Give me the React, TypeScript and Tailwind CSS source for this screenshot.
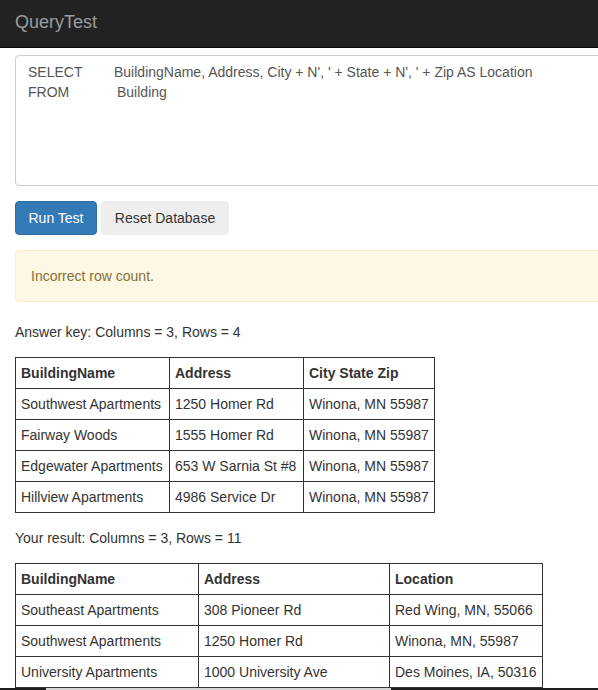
export default function App() {
  const answerRows = [
    ["Southwest Apartments", "1250 Homer Rd", "Winona, MN 55987"],
    ["Fairway Woods", "1555 Homer Rd", "Winona, MN 55987"],
    ["Edgewater Apartments", "653 W Sarnia St #8", "Winona, MN 55987"],
    ["Hillview Apartments", "4986 Service Dr", "Winona, MN 55987"],
  ];

  const resultRows = [
    ["Southeast Apartments", "308 Pioneer Rd", "Red Wing, MN, 55066"],
    ["Southwest Apartments", "1250 Homer Rd", "Winona, MN, 55987"],
    ["University Apartments", "1000 University Ave", "Des Moines, IA, 50316"],
  ];

  const cell = "border border-[#333] px-[5px] py-[5px] leading-5 whitespace-nowrap text-left align-top";

  return (
    <div className="min-h-screen w-full overflow-x-hidden bg-white text-[14px] text-[#333] font-['Liberation_Sans',Arial,sans-serif]">
      {/* Navbar */}
      <div className="h-[48px] bg-[#222] border-b border-[#080808]">
        <div className="px-[15px] pt-[12px] text-[18px] leading-5 text-[#9d9d9d]">QueryTest</div>
      </div>

      <div className="px-[15px] pt-[7px]">
        {/* Query box */}
        <div className="w-[800px] h-[131px] rounded border border-[#ccc] bg-white px-[12px] pt-[6px] text-[#555] leading-5">
          <div className="flex">
            <span className="w-[86px] shrink-0">SELECT</span>
            <span>BuildingName, Address, City + N', ' + State + N', ' + Zip AS Location</span>
          </div>
          <div className="flex">
            <span className="w-[89px] shrink-0">FROM</span>
            <span>Building</span>
          </div>
        </div>

        {/* Buttons */}
        <div className="mt-[15px] flex gap-1">
          <button className="h-[34px] w-[82px] rounded border border-[#2e6da4] bg-[#337ab7] text-white leading-5">
            Run Test
          </button>
          <button className="h-[34px] w-[128px] rounded border border-[#eee] bg-[#eee] text-[#333] leading-5">
            Reset Database
          </button>
        </div>

        {/* Alert */}
        <div className="mt-[15px] w-[800px] rounded border border-[#faebcc] bg-[#fcf8e3] p-[15px] leading-5 text-[#8a6d3b]">
          Incorrect row count.
        </div>

        <p className="mt-[20px] leading-5">Answer key: Columns = 3, Rows = 4</p>
        <table className="mt-[15px] border-collapse">
          <thead>
            <tr>
              <th className={cell + " w-[154px] font-bold"}>BuildingName</th>
              <th className={cell + " w-[134px] font-bold"}>Address</th>
              <th className={cell + " w-[131px] font-bold"}>City State Zip</th>
            </tr>
          </thead>
          <tbody>
            {answerRows.map((r) => (
              <tr key={r[0]}>
                {r.map((c, i) => (
                  <td key={i} className={cell}>
                    {c}
                  </td>
                ))}
              </tr>
            ))}
          </tbody>
        </table>

        <p className="mt-[15px] leading-5">Your result: Columns = 3, Rows = 11</p>
        <table className="mt-[15px] border-collapse">
          <thead>
            <tr>
              <th className={cell + " w-[183px] font-bold"}>BuildingName</th>
              <th className={cell + " w-[191px] font-bold"}>Address</th>
              <th className={cell + " w-[153px] font-bold"}>Location</th>
            </tr>
          </thead>
          <tbody>
            {resultRows.map((r) => (
              <tr key={r[0]}>
                {r.map((c, i) => (
                  <td key={i} className={cell}>
                    {c}
                  </td>
                ))}
              </tr>
            ))}
          </tbody>
        </table>
      </div>

      {/* horizontal scrollbar strip */}
      <div className="fixed bottom-0 left-0 right-0 h-[2px] bg-[#1e1e1e]">
        <div className="ml-[46px] h-[2px] w-[345px] bg-[#d4d4d4]" />
      </div>
    </div>
  );
}
